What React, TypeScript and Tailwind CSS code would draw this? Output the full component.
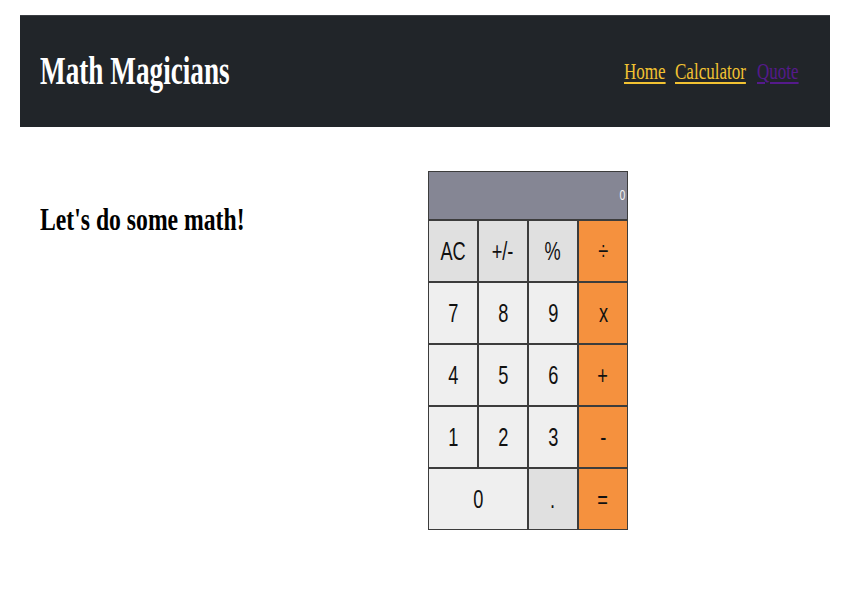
const serif = { fontFamily: '"Liberation Serif", "Times New Roman", serif' }
const sans = { fontFamily: '"Liberation Sans", Arial, sans-serif' }

const keys = [
  { label: 'AC', tone: 'gray' },
  { label: '+/-', tone: 'gray' },
  { label: '%', tone: 'gray' },
  { label: '÷', tone: 'orange' },
  { label: '7', tone: 'light' },
  { label: '8', tone: 'light' },
  { label: '9', tone: 'light' },
  { label: 'x', tone: 'orange' },
  { label: '4', tone: 'light' },
  { label: '5', tone: 'light' },
  { label: '6', tone: 'light' },
  { label: '+', tone: 'orange' },
  { label: '1', tone: 'light' },
  { label: '2', tone: 'light' },
  { label: '3', tone: 'light' },
  { label: '-', tone: 'orange' },
  { label: '0', tone: 'light', wide: true },
  { label: '.', tone: 'gray' },
  { label: '=', tone: 'orange' },
]

const toneClass: Record<string, string> = {
  gray: 'bg-[#e0e0e0]',
  light: 'bg-[#efefef]',
  orange: 'bg-[#f5913e]',
}

function NavLink({ label, width, color }: { label: string; width: string; color: string }) {
  return (
    <a href="#" className={`${width} ${color} block whitespace-nowrap text-[23px] leading-none`} style={serif}>
      <span className="inline-block origin-left scale-x-[0.74] underline underline-offset-[3px]">{label}</span>
    </a>
  )
}

export default function App() {
  return (
    <div className="bg-white min-h-[600px]">
      {/* Header */}
      <header className="mx-[20px] mt-[15px] h-[112px] bg-[#212529] border-t border-[#3a3d42] flex items-center justify-between pl-[20px] pr-[30px]">
        <h1 className="w-[190px] text-white font-bold text-[40px] leading-none whitespace-nowrap -mt-[2px]" style={serif}>
          <span className="inline-block origin-left scale-x-[0.68]">Math Magicians</span>
        </h1>
        <nav className="flex items-center gap-[10px]">
          <NavLink label="Home" width="w-[41px]" color="text-[#f2c232] decoration-[#f2c232]" />
          <NavLink label="Calculator" width="w-[72px]" color="text-[#f2c232] decoration-[#f2c232]" />
          <NavLink label="Quote" width="w-[43px]" color="text-[#551a8b] decoration-[#551a8b]" />
        </nav>
      </header>

      {/* Main */}
      <main className="flex pl-[40px] pt-[44px]">
        <div className="w-[388px] pt-[32px]">
          <h2 className="text-black font-bold text-[32px] leading-none whitespace-nowrap" style={serif}>
            <span className="inline-block origin-left scale-x-[0.74]">Let's do some math!</span>
          </h2>
        </div>

        <div className="w-[200px] bg-[#3c3c3c] p-[1px] flex flex-col gap-[2px]" style={sans}>
          <div className="h-[47px] bg-[#858694] flex items-center justify-end pr-[2px] text-[#f3f3f3] text-[15px]">
            <span className="inline-block origin-right scale-x-[0.7]">0</span>
          </div>
          <div className="grid grid-cols-4 gap-[2px]">
            {keys.map((k) => (
              <button
                key={k.label}
                type="button"
                className={`${toneClass[k.tone]} ${k.wide ? 'col-span-2' : ''} h-[60px] flex items-center justify-center text-[26px] text-[#111]`}
              >
                <span className="inline-block scale-x-[0.7]">{k.label}</span>
              </button>
            ))}
          </div>
        </div>
      </main>
    </div>
  )
}
